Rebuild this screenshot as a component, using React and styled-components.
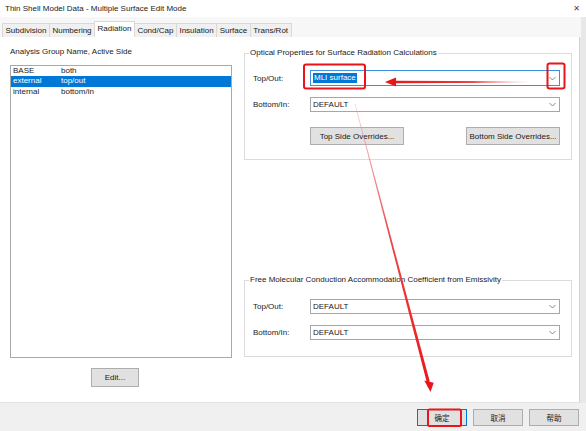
import React from "react";
import styled, { createGlobalStyle } from "styled-components";

const GlobalStyle = createGlobalStyle`
  html, body {
    margin: 0;
    padding: 0;
    background: #ffffff;
  }
  body {
    font-family: "Liberation Sans", "Noto Sans CJK SC", sans-serif;
    font-size: 8px;
    color: #1a1a1a;
  }
`;

const groups = [
  { name: "BASE", side: "both" },
  { name: "external", side: "top/out", selected: true },
  { name: "internal", side: "bottom/in" }
];

const tabs = ["Subdivision", "Numbering", "Radiation", "Cond/Cap", "Insulation", "Surface", "Trans/Rot"];

// points of a line that grows from w0 at the start to w1 at the end
function taper(x0, y0, x1, y1, w0, w1) {
  const dx = x1 - x0;
  const dy = y1 - y0;
  const len = Math.sqrt(dx * dx + dy * dy);
  const px = -dy / len;
  const py = dx / len;
  return [
    [x0 + px * w0 / 2, y0 + py * w0 / 2],
    [x1 + px * w1 / 2, y1 + py * w1 / 2],
    [x1 - px * w1 / 2, y1 - py * w1 / 2],
    [x0 - px * w0 / 2, y0 - py * w0 / 2]
  ].map(p => p.join(",")).join(" ");
}

function Chevron() {
  return (
    <svg width="7" height="5" viewBox="0 0 7 5">
      <path d="M0.5 1 L3.5 4 L6.5 1" fill="none" stroke="#7a7a7a" strokeWidth="0.9" />
    </svg>
  );
}

function Combo({ value, focused }) {
  return (
    <ComboBox focused={focused}>
      {focused ? <Highlight>{value}</Highlight> : <ComboText>{value}</ComboText>}
      <Chevron />
    </ComboBox>
  );
}

function Field({ label, value, focused }) {
  return (
    <FieldRow>
      <FieldLabel>{label}</FieldLabel>
      <Combo value={value} focused={focused} />
    </FieldRow>
  );
}

function Annotations() {
  return (
    <Overlay width="586" height="431" viewBox="0 0 586 431">
      <defs>
        <linearGradient id="hfade" x1="385" y1="0" x2="532" y2="0" gradientUnits="userSpaceOnUse">
          <stop offset="0" stopColor="#e8151b" />
          <stop offset="0.6" stopColor="#ec3a3a" />
          <stop offset="1" stopColor="#f49a9a" stopOpacity="0" />
        </linearGradient>
        <linearGradient id="vfade" x1="0" y1="104" x2="0" y2="390" gradientUnits="userSpaceOnUse">
          <stop offset="0" stopColor="#f4a0a0" stopOpacity="0.6" />
          <stop offset="0.45" stopColor="#ec4a4a" />
          <stop offset="1" stopColor="#e8151b" />
        </linearGradient>
      </defs>
      <rect x="304" y="64.5" width="61" height="24" rx="2" fill="none" stroke="#e8151b" strokeWidth="2" />
      <rect x="547.5" y="63.5" width="17" height="25" rx="2" fill="none" stroke="#e8151b" strokeWidth="2" />
      <polygon points={taper(532, 82, 394, 82, 1.2, 2.6)} fill="url(#hfade)" />
      <polygon points="385,82 396,77.5 396,86.5" fill="#e8151b" />
      <polygon points={taper(355, 104, 428.3, 382, 0.6, 3)} fill="url(#vfade)" />
      <polygon points="430.5,392 424.3,380.5 433.7,382.7" fill="#e8151b" />
      <rect x="428" y="409.5" width="33" height="16.5" rx="1.5" fill="none" stroke="#e8151b" strokeWidth="2" />
    </Overlay>
  );
}

export default function App() {
  return (
    <>
      <GlobalStyle />
      <Window>
        <TitleBar>
          <span>Thin Shell Model Data - Multiple Surface Edit Mode</span>
          <Close>✕</Close>
        </TitleBar>
        <TabStrip>
          {tabs.map(t => (
            <Tab key={t} active={t === "Radiation"}>{t}</Tab>
          ))}
        </TabStrip>
        <Body>
          <Panel>
            <LeftColumn>
              <Caption>Analysis Group Name, Active Side</Caption>
              <ListBox>
                {groups.map(g => (
                  <ListRow key={g.name} selected={g.selected}>
                    <NameCell>{g.name}</NameCell>
                    <span>{g.side}</span>
                  </ListRow>
                ))}
              </ListBox>
              <EditButton>Edit...</EditButton>
            </LeftColumn>
            <RightColumn>
              <GroupBox>
                <Legend>Optical Properties for Surface Radiation Calculations</Legend>
                <GroupInner top={12} bottom={14}>
                  <Field label="Top/Out:" value="MLI surface" focused />
                  <Field label="Bottom/In:" value="DEFAULT" />
                  <ButtonRow>
                    <Button width={94}>Top Side Overrides...</Button>
                    <Button width={94}>Bottom Side Overrides...</Button>
                  </ButtonRow>
                </GroupInner>
              </GroupBox>
              <GroupBox spaced>
                <Legend>Free Molecular Conduction Accommodation Coefficient from Emissivity</Legend>
                <GroupInner top={13} bottom={16}>
                  <Field label="Top/Out:" value="DEFAULT" />
                  <Field label="Bottom/In:" value="DEFAULT" />
                </GroupInner>
              </GroupBox>
            </RightColumn>
          </Panel>
          <SideStrip />
        </Body>
        <Footer>
          <Button width={50} primary>确定</Button>
          <Button width={50}>取消</Button>
          <Button width={50}>帮助</Button>
        </Footer>
        <Annotations />
      </Window>
    </>
  );
}

const Window = styled.div`
  position: relative;
  width: 586px;
  height: 431px;
  display: flex;
  flex-direction: column;
  background: #f0f0f0;
  overflow: hidden;
`;

const TitleBar = styled.div`
  height: 17px;
  flex: none;
  display: flex;
  align-items: center;
  justify-content: space-between;
  padding: 0 6px 0 5px;
  background: #ffffff;
  font-size: 8px;
  color: #222;
`;

const Close = styled.span`
  font-size: 8px;
  color: #444;
  font-family: "DejaVu Sans", sans-serif;
`;

const TabStrip = styled.div`
  height: 20px;
  flex: none;
  display: flex;
  align-items: flex-end;
  padding-left: 3px;
  background: #f7f7f7;
  border-right: 5px solid #e8e8e8;
`;

const Tab = styled.div`
  height: ${p => (p.active ? 16 : 14)}px;
  line-height: 14px;
  padding: 0 2.5px;
  box-sizing: border-box;
  background: ${p => (p.active ? "#ffffff" : "#f0f0f0")};
  border: 1px solid #d9d9d9;
  border-bottom: none;
  margin-left: -1px;
  color: #1a1a1a;
  white-space: nowrap;
`;

const Body = styled.div`
  flex: 1;
  display: flex;
  min-height: 0;
`;

const Panel = styled.div`
  width: 580px;
  background: #ffffff;
  display: grid;
  grid-template-columns: 222px 328px;
  column-gap: 12px;
  padding: 10px 0 0 10px;
  box-sizing: border-box;
  border-right: 1px solid #d4d4d4;
  border-bottom: 1px solid #e3e3e3;
`;

const SideStrip = styled.div`
  flex: 1;
  background: #e8e8e8;
`;

const LeftColumn = styled.div`
  display: flex;
  flex-direction: column;
`;

const Caption = styled.div`
  line-height: 10px;
  height: 10px;
`;

const ListBox = styled.div`
  margin-top: 8px;
  height: 293px;
  border: 1px solid #a9a9a9;
  box-sizing: border-box;
`;

const ListRow = styled.div`
  display: flex;
  height: 10.4px;
  line-height: 10.4px;
  padding-left: 2px;
  background: ${p => (p.selected ? "#0078d7" : "transparent")};
  color: ${p => (p.selected ? "#ffffff" : "#1a1a1a")};
`;

const NameCell = styled.span`
  width: 48px;
`;

const Button = styled.div`
  width: ${p => p.width}px;
  height: 18px;
  box-sizing: border-box;
  display: flex;
  align-items: center;
  justify-content: center;
  background: #e1e1e1;
  border: 1px solid ${p => (p.primary ? "#0078d7" : "#adadad")};
  color: #1a1a1a;
  white-space: nowrap;
`;

const EditButton = styled(Button).attrs({ width: 48 })`
  margin: 10px 0 0 81px;
  height: 19px;
`;

const RightColumn = styled.div`
  display: flex;
  flex-direction: column;
  padding-top: 1px;
`;

const GroupBox = styled.fieldset`
  margin: ${p => (p.spaced ? "115px" : "0")} 0 0 0;
  padding: 0;
  border: 1px solid #dcdcdc;
  min-width: 0;
`;

const Legend = styled.legend`
  margin-left: 4px;
  padding: 0 1px;
  line-height: 10px;
  color: #1a1a1a;
`;

const GroupInner = styled.div`
  display: flex;
  flex-direction: column;
  gap: 10px;
  padding: ${p => p.top}px 11px ${p => p.bottom}px 8px;
`;

const FieldRow = styled.div`
  display: flex;
  align-items: center;
  height: 16px;
`;

const FieldLabel = styled.span`
  width: 57px;
  flex: none;
`;

const ComboBox = styled.div`
  flex: 1;
  height: ${p => (p.focused ? 16 : 15)}px;
  box-sizing: border-box;
  border: 1px solid ${p => (p.focused ? "#3d8fe0" : "#a6a6a6")};
  display: flex;
  align-items: center;
  justify-content: space-between;
  padding: 0 3px 0 2px;
  background: #ffffff;
`;

const ComboText = styled.span`
  color: #1a1a1a;
`;

const Highlight = styled.span`
  background: #0078d7;
  color: #ffffff;
  padding: 0 1px;
  line-height: 10px;
`;

const ButtonRow = styled.div`
  display: flex;
  justify-content: space-between;
  margin: 5px 0 0 57px;
`;

const Footer = styled.div`
  height: 28px;
  flex: none;
  display: flex;
  align-items: center;
  justify-content: flex-end;
  gap: 6px;
  padding-right: 7px;
  background: #f0f0f0;
  ${Button} {
    height: 17px;
    font-family: "Noto Sans CJK SC", sans-serif;
    font-size: 7.5px;
  }
`;

const Overlay = styled.svg`
  position: absolute;
  left: 0;
  top: 0;
  pointer-events: none;
`;
